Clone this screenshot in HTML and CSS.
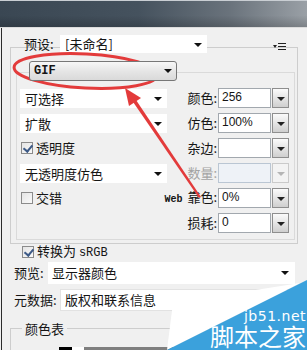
FILE: index.html
```html
<!DOCTYPE html>
<html lang="zh-CN">
<head>
  <meta charset="UTF-8" />
  <title>存储为 Web 所用格式</title>
  <link rel="stylesheet" href="styles.css">
</head>
<body>
  <div class="titlebar"></div>

  <div class="panel">
    <div class="preset-row">
      <span class="lbl preset-lbl">预设:</span>
      <div class="field preset">[未命名]</div>
      <svg class="menu-icon" width="14" height="8" viewBox="0 0 14 8">
        <path d="M0 2 L4 2 L2 5 Z" fill="#222"/>
        <rect x="5" y="0" width="8" height="1" fill="#222"/>
        <rect x="5" y="3" width="8" height="1" fill="#222"/>
        <rect x="5" y="6" width="8" height="1" fill="#222"/>
      </svg>
    </div>

    <div class="outer">
      <div class="format">GIF</div>
      <div class="inner">
        <div class="row">
          <div class="left"><div class="field sel">可选择</div></div>
          <div class="right"><span class="lbl">颜色:</span><div class="combo"><span class="val">256</span><span class="btn"></span></div></div>
        </div>
        <div class="row">
          <div class="left"><div class="field sel">扩散</div></div>
          <div class="right"><span class="lbl">仿色:</span><div class="combo"><span class="val">100%</span><span class="btn"></span></div></div>
        </div>
        <div class="row">
          <div class="left"><label class="check"><span class="box on"></span><span>透明度</span></label></div>
          <div class="right"><span class="lbl">杂边:</span><div class="combo"><span class="val"></span><span class="btn"></span></div></div>
        </div>
        <div class="row">
          <div class="left"><div class="field sel">无透明度仿色</div></div>
          <div class="right off"><span class="lbl">数量:</span><div class="combo"><span class="val"></span><span class="btn"></span></div></div>
        </div>
        <div class="row">
          <div class="left"><label class="check"><span class="box"></span><span>交错</span></label></div>
          <div class="right"><span class="lbl"><span class="mono web">Web</span> 靠色:</span><div class="combo"><span class="val">0%</span><span class="btn"></span></div></div>
        </div>
        <div class="row">
          <div class="left"></div>
          <div class="right"><span class="lbl">损耗:</span><div class="combo"><span class="val">0</span><span class="btn"></span></div></div>
        </div>
      </div>
    </div>

    <label class="check srgb"><span class="box on"></span><span>转换为 <span class="mono">sRGB</span></span></label>

    <div class="line-row">
      <span class="lbl wide-34">预览:</span>
      <div class="field sel long">显示器颜色</div>
    </div>
    <div class="line-row meta">
      <span class="lbl wide-46">元数据:</span>
      <div class="field long plain">版权和联系信息</div>
    </div>

    <div class="ctable">
      <span class="ct-title">颜色表</span>
      <div class="swatches">
        <span class="sw black">✦</span>
        <span class="sw white">◇</span>
        <span class="sw gray"></span>
      </div>
    </div>
  </div>

  <svg class="marks" width="307" height="350" viewBox="0 0 307 350">
    <ellipse cx="86" cy="71" rx="72" ry="17" fill="none" stroke="#e33b3b" stroke-width="3" transform="rotate(3 86 71)"/>
    <polygon points="131,99 134,97 201,197 199,198" fill="#e33b3b"/>
    <polygon points="125,88 129,106 141,98" fill="#e33b3b"/>
    <polygon points="173,303 300,283 167,350" fill="#ffffff"/>
    <polygon points="167,350 307,280 307,350" fill="#3ba1dc"/>
  </svg>
  <div class="wm-site">jb51.net</div>
  <div class="wm-name">脚本之家</div>
</body>
</html>
```

FILE: styles.css
```css
* {
  margin: 0;
  padding: 0;
  box-sizing: border-box;
}

body {
  width: 307px;
  height: 350px;
  overflow: hidden;
  position: relative;
  background-color: #f0f0f0;
  color: #151515;
  font-family: "Noto Sans CJK SC", sans-serif;
  font-size: 13px;
  line-height: 18px;
}

.titlebar {
  height: 28px;
  border-top: 1px solid #c9ced3;
  border-bottom: 1px solid #dcdcdc;
  background:
    linear-gradient(180deg, rgba(0,0,0,0) 55%, rgba(0,0,0,0.18) 100%),
    linear-gradient(90deg, #3a4753 0%, #45525e 45%, #6a737c 75%, #9aa0a6 100%);
}

.panel {
  margin-left: 1px;
  border-left: 1px solid #2b2b2b;
  height: 322px;
  padding-top: 7px;
}

.lbl {
  white-space: nowrap;
}

.mono {
  font-family: "Liberation Mono", monospace;
  font-size: 12px;
}

.web {
  font-size: 10px;
  font-weight: bold;
  margin-right: 2px;
}

/* fields */
.field {
  position: relative;
  height: 19px;
  background-color: #fff;
  padding-left: 5px;
  line-height: 19px;
  white-space: nowrap;
}

.preset::after,
.sel::after,
.format::after {
  content: "";
  position: absolute;
  right: 5px;
  top: 8px;
  border-left: 4px solid transparent;
  border-right: 4px solid transparent;
  border-top: 4px solid #111;
}

.preset-row {
  display: flex;
  align-items: center;
  height: 18px;
  margin-bottom: -6px;
  padding-left: 22px;
}

.preset-lbl {
  width: 36px;
}

.preset {
  width: 147px;
  height: 18px;
  line-height: 18px;
}

.menu-icon {
  margin-left: auto;
  margin-right: 20px;
  margin-top: 6px;
}

/* format group */
.outer {
  margin-left: 8px;
  width: 288px;
  height: 197px;
  border: 1px solid #cdcdcd;
  padding-top: 13px;
}

.format {
  position: relative;
  z-index: 1;
  margin-left: 18px;
  width: 148px;
  height: 20px;
  border: 1px solid #777;
  border-radius: 3px;
  background: linear-gradient(180deg, #f7f7f7 0%, #e6e6e6 50%, #d9d9d9 100%);
  font-family: "Liberation Mono", monospace;
  font-weight: bold;
  font-size: 12px;
  line-height: 18px;
  padding-left: 4px;
}

.format::after {
  top: 7px;
  right: 4px;
}

.inner {
  margin: -9px 2px 0 5px;
  height: 168px;
  border: 1px solid #dadada;
  padding: 15px 5px 0 3px;
}

.row {
  display: flex;
  align-items: center;
  height: 20px;
  margin-bottom: 5px;
}

.left {
  width: 147px;
}

.left .sel {
  height: 19px;
}

.right {
  margin-left: auto;
  display: flex;
  align-items: center;
}

.right .lbl {
  margin-right: 1px;
}

.combo {
  display: flex;
  height: 20px;
}

.val {
  width: 53px;
  height: 20px;
  border: 1px solid #a2a8ae;
  background-color: #fff;
  font-family: "Liberation Sans", sans-serif;
  font-size: 12px;
  line-height: 16px;
  padding-left: 3px;
}

.btn {
  position: relative;
  width: 17px;
  height: 20px;
  margin-left: 1px;
  border: 1px solid #8e8e8e;
  background: linear-gradient(180deg, #fbfbfb 0%, #e3e3e3 55%, #cfcfcf 100%);
}

.btn::after {
  content: "";
  position: absolute;
  left: 4px;
  top: 8px;
  border-left: 4px solid transparent;
  border-right: 4px solid transparent;
  border-top: 4px solid #222;
}

.off .lbl {
  color: #a3a3a3;
}

.off .val {
  background-color: #eef2f7;
  border-color: #bac6d3;
}

.off .btn {
  border-color: #cacaca;
  background: #f3f3f3;
}

.off .btn::after {
  border-top-color: #b5b5b5;
}

/* checkboxes */
.check {
  display: flex;
  align-items: center;
  padding-left: 1px;
  white-space: nowrap;
}

.box {
  position: relative;
  width: 12px;
  height: 12px;
  margin-right: 3px;
  border: 1px solid #8b8b8b;
  background: linear-gradient(135deg, #e4e4e4 0%, #fafafa 100%);
}

.box.on::after {
  content: "";
  position: absolute;
  left: 3px;
  top: 0;
  width: 4px;
  height: 7px;
  border-right: 2px solid #3d5a87;
  border-bottom: 2px solid #3d5a87;
  transform: rotate(40deg);
}

.srgb {
  height: 14px;
  margin-top: 1px;
  padding-left: 20px;
  line-height: 14px;
}

/* preview / metadata */
.line-row {
  display: flex;
  align-items: center;
  height: 22px;
  margin-top: 3px;
  padding-left: 12px;
  margin-right: 12px;
}

.line-row.meta {
  margin-top: 5px;
}

.wide-34 {
  width: 34px;
}

.wide-46 {
  width: 46px;
}

.long {
  flex: 1;
  height: 22px;
  line-height: 22px;
  padding-left: 4px;
}

.long.sel::after {
  top: 9px;
  right: 6px;
}

.plain {
  border: 1px solid #e2e2e2;
  line-height: 20px;
}

/* colour table */
.ctable {
  margin: 17px 0 0 8px;
  height: 30px;
  border-top: 1px solid #cdcdcd;
  border-left: 1px solid #cdcdcd;
}

.ct-title {
  display: inline-block;
  margin: -8px 0 0 11px;
  padding: 0 3px;
  background-color: #f0f0f0;
  line-height: 15px;
  vertical-align: top;
}

.swatches {
  display: flex;
  margin: 0 12px 0 48px;
  height: 13px;
}

.sw {
  width: 13px;
  height: 13px;
  font-size: 7px;
  line-height: 13px;
  text-align: center;
  font-family: "DejaVu Sans", sans-serif;
}

.black {
  background-color: #000;
  color: #fff;
}

.white {
  width: 12px;
  background-color: #fff;
  color: #000;
}

.gray {
  flex: 1;
  background-color: #7f7f7f;
}

/* overlays */
.marks {
  position: absolute;
  left: 0;
  top: 0;
}

.wm-site {
  position: absolute;
  right: 1px;
  top: 308px;
  color: #fff;
  font-family: "DejaVu Sans", sans-serif;
  font-size: 14px;
  line-height: 17px;
  letter-spacing: 0.5px;
}

.wm-name {
  position: absolute;
  right: 1px;
  top: 323px;
  color: #fff;
  font-family: "Noto Sans CJK SC", sans-serif;
  font-size: 24px;
  line-height: 26px;
}
```
